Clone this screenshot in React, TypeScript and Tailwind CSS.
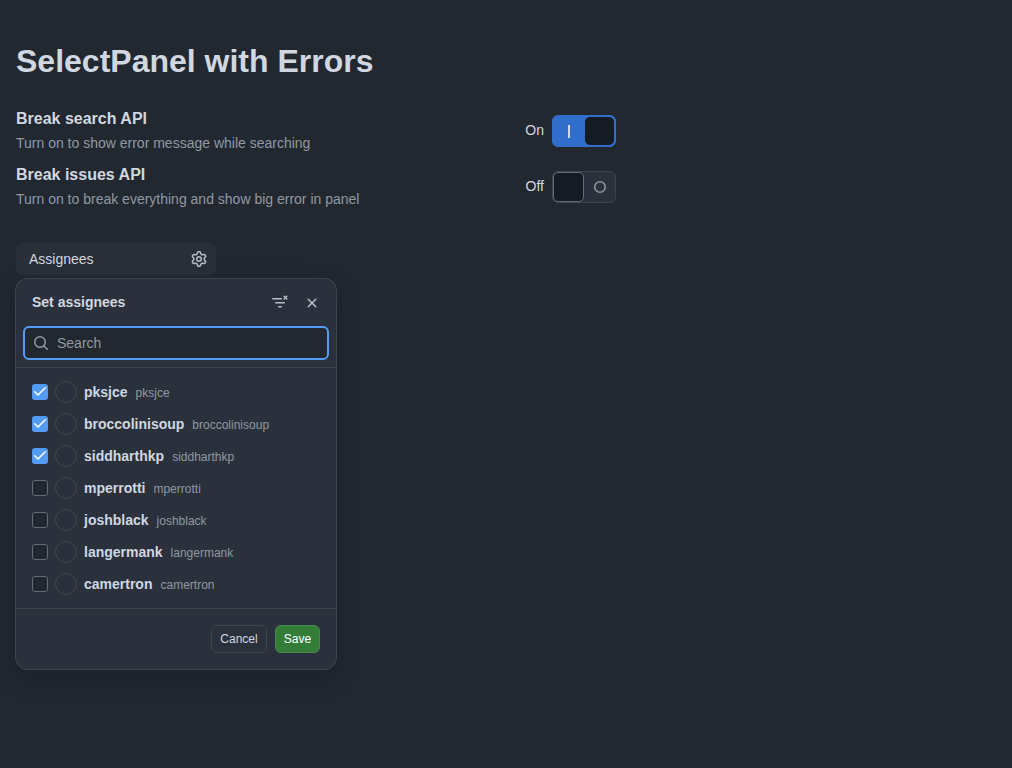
import React from "react";

const users = [
  { name: "pksjce", checked: true },
  { name: "broccolinisoup", checked: true },
  { name: "siddharthkp", checked: true },
  { name: "mperrotti", checked: false },
  { name: "joshblack", checked: false },
  { name: "langermank", checked: false },
  { name: "camertron", checked: false },
];

const GEAR =
  "M8 0a8.2 8.2 0 0 1 .701.031C9.444.095 9.99.645 10.16 1.29l.288 1.107c.018.066.079.158.212.224.231.114.454.243.668.386.123.082.233.09.299.071l1.103-.303c.644-.176 1.392.021 1.82.63.27.385.506.792.704 1.218.315.675.111 1.422-.364 1.891l-.814.806c-.049.048-.098.147-.088.294.016.257.016.515 0 .772-.01.147.038.246.088.294l.814.806c.475.469.679 1.216.364 1.891a7.977 7.977 0 0 1-.704 1.217c-.428.61-1.176.807-1.82.63l-1.102-.302c-.067-.019-.177-.011-.3.071a5.909 5.909 0 0 1-.668.386c-.133.066-.194.158-.211.224l-.29 1.106c-.168.646-.715 1.196-1.458 1.26a8.006 8.006 0 0 1-1.402 0c-.743-.064-1.289-.614-1.458-1.26l-.289-1.106c-.018-.066-.079-.158-.212-.224a5.738 5.738 0 0 1-.668-.386c-.123-.082-.233-.09-.299-.071l-1.103.303c-.644.176-1.392-.021-1.82-.63a8.12 8.12 0 0 1-.704-1.218c-.315-.675-.111-1.422.363-1.891l.815-.806c.05-.048.098-.147.088-.294a6.214 6.214 0 0 1 0-.772c.01-.147-.038-.246-.088-.294l-.815-.806C.635 6.045.431 5.298.746 4.623a7.92 7.92 0 0 1 .704-1.217c.428-.61 1.176-.807 1.82-.63l1.102.302c.067.019.177.011.3-.071.214-.143.437-.272.668-.386.133-.066.194-.158.211-.224l.29-1.106C6.009.645 6.556.095 7.299.03 7.53.01 7.764 0 8 0Zm-.571 1.525c-.036.003-.108.036-.137.146l-.289 1.105c-.147.561-.549.967-.998 1.189-.173.086-.34.183-.5.29-.417.278-.97.423-1.529.27l-1.103-.303c-.109-.03-.175.016-.195.045-.22.312-.412.644-.573.99-.014.031-.021.11.059.19l.815.806c.411.406.562.957.53 1.456a4.709 4.709 0 0 0 0 .582c.032.499-.119 1.05-.53 1.456l-.815.806c-.081.08-.073.159-.059.19.162.346.353.677.573.989.02.03.085.076.195.046l1.102-.303c.56-.153 1.113-.008 1.53.27.161.107.328.204.501.29.447.222.85.629.997 1.189l.289 1.105c.029.109.101.143.137.146a6.6 6.6 0 0 0 1.142 0c.036-.003.108-.036.137-.146l.289-1.105c.147-.561.549-.967.998-1.189.173-.086.34-.183.5-.29.417-.278.97-.423 1.529-.27l1.103.303c.109.029.175-.016.195-.045.22-.313.411-.644.573-.99.014-.031.021-.11-.059-.19l-.815-.806c-.411-.406-.562-.957-.53-1.456a4.709 4.709 0 0 0 0-.582c-.032-.499.119-1.05.53-1.456l.815-.806c.081-.08.073-.159.059-.19a6.464 6.464 0 0 0-.573-.989c-.02-.03-.085-.076-.195-.046l-1.102.303c-.56.153-1.113.008-1.53-.27a4.44 4.44 0 0 0-.501-.29c-.447-.222-.85-.629-.997-1.189l-.289-1.105c-.029-.11-.101-.143-.137-.146a6.6 6.6 0 0 0-1.142 0ZM11 8a3 3 0 1 1-6 0 3 3 0 0 1 6 0ZM9.5 8a1.5 1.5 0 1 0-3.001.001A1.5 1.5 0 0 0 9.5 8Z";
const SEARCH =
  "M10.68 11.74a6 6 0 0 1-7.922-8.982 6 6 0 0 1 8.982 7.922l3.04 3.04a.749.749 0 0 1-.326 1.275.749.749 0 0 1-.734-.215ZM11.5 7a4.499 4.499 0 1 0-8.997 0A4.499 4.499 0 0 0 11.5 7Z";
const CLOSE =
  "M3.72 3.72a.75.75 0 0 1 1.06 0L8 6.94l3.22-3.22a.749.749 0 0 1 1.275.326.749.749 0 0 1-.215.734L9.06 8l3.22 3.22a.749.749 0 0 1-.326 1.275.749.749 0 0 1-.734-.215L8 9.06l-3.22 3.22a.751.751 0 0 1-1.042-.018.751.751 0 0 1-.018-1.042L6.94 8 3.72 4.78a.75.75 0 0 1 0-1.06Z";

function Icon({ d, className = "" }: { d: string; className?: string }) {
  return (
    <svg viewBox="0 0 16 16" width="16" height="16" fill="currentColor" className={className}>
      <path fillRule="evenodd" d={d} />
    </svg>
  );
}

function FilterRemoveIcon() {
  return (
    <svg viewBox="0 0 16 16" width="16" height="16" fill="none" stroke="currentColor" strokeWidth="1.5" strokeLinecap="round">
      <path d="M.75 4.75h8.5M3.75 8.75h8.5M6.75 12.75h2.5" />
      <path d="M12.1 2.3l2.7 2.7M14.8 2.3l-2.7 2.7" strokeWidth="1.5" />
    </svg>
  );
}

function Toggle({ on }: { on: boolean }) {
  return on ? (
    <div className="flex h-8 w-16 items-center rounded-md border border-[#316dca] bg-[#316dca]">
      <div className="flex flex-1 items-center justify-center">
        <div className="h-[13px] w-0.5 bg-[#d1d7e0]" />
      </div>
      <div className="mr-px h-7 w-[29px] rounded-[5px] bg-[#151b23]" />
    </div>
  ) : (
    <div className="flex h-8 w-16 items-center rounded-md border border-[#3d444d] bg-[#2a313c]">
      <div className="h-[30px] w-[31px] rounded-[5px] border border-[#656c76] bg-[#151b23]" />
      <div className="flex flex-1 items-center justify-center">
        <svg viewBox="0 0 16 16" width="16" height="16" fill="none" stroke="#9198a1" strokeWidth="1.5">
          <circle cx="8" cy="8" r="5.25" />
        </svg>
      </div>
    </div>
  );
}

function Setting({ title, caption, on }: { title: string; caption: string; on: boolean }) {
  return (
    <div className="flex h-14 w-[600px] items-start justify-between">
      <div>
        <div className="text-base leading-6 font-bold">{title}</div>
        <div className="mt-0.5 text-sm leading-[21px] text-[#9198a1]">{caption}</div>
      </div>
      <div className="mt-2 flex items-center gap-2">
        <span className="pb-0.5 text-sm leading-[21px]">{on ? "On" : "Off"}</span>
        <Toggle on={on} />
      </div>
    </div>
  );
}

function Checkbox({ checked }: { checked: boolean }) {
  return checked ? (
    <div className="flex size-4 justify-center rounded-[3px] bg-[#539bf5] pt-[3px]">
      <svg viewBox="0 0 12 9" width="12" height="9" fill="white">
        <path
          fillRule="evenodd"
          clipRule="evenodd"
          d="M11.7803 0.219625C11.921 0.360427 12 0.551305 12 0.750313C12 0.949321 11.921 1.1402 11.7803 1.281L4.52864 8.5327C4.38784 8.67341 4.19696 8.75244 3.99795 8.75244C3.79894 8.75244 3.60807 8.67341 3.46727 8.5327L0.219625 5.28505C0.0870461 5.14277 0.0148699 4.95459 0.0183006 4.76014C0.0217313 4.5657 0.100503 4.38018 0.238018 4.24266C0.375533 4.10515 0.561056 4.02638 0.755499 4.02295C0.949943 4.01952 1.13812 4.09169 1.2804 4.22427L3.99795 6.94182L10.7189 0.219625C10.8598 0.0790133 11.0506 0 11.2496 0C11.4487 0 11.6395 0.0790133 11.7803 0.219625Z"
        />
      </svg>
    </div>
  ) : (
    <div className="size-4 rounded-[3px] border border-[#656c76] bg-[#212830]" />
  );
}

export default function App() {
  return (
    <div className="min-h-screen bg-[#212830] px-4 pt-[37px] font-['Liberation_Sans',Arial,sans-serif] text-sm text-[#d1d7e0]">
      <h1 className="mb-[22px] text-[32px] leading-[48px] font-bold">SelectPanel with Errors</h1>

      <Setting title="Break search API" caption="Turn on to show error message while searching" on />
      <Setting title="Break issues API" caption="Turn on to break everything and show big error in panel" on={false} />

      <button className="mt-6 flex h-8 w-[200px] items-center justify-between rounded-md bg-[#282f37] pr-[9px] pl-[13px]">
        <span>Assignees</span>
        <Icon d={GEAR} className="text-[#b7bdc8]" />
      </button>

      <div className="mt-1 h-[390px] w-80 rounded-xl bg-[#2a313c] shadow-[0_0_0_1px_#3d444d,0_8px_24px_0_#01040933]">
        <div className="flex h-12 items-center pr-4 pl-4">
          <h2 className="flex-1 pb-0.5 text-sm font-bold">Set assignees</h2>
          <div className="flex items-center gap-4 pb-0.5 text-[#b7bdc8]">
            <FilterRemoveIcon />
            <Icon d={CLOSE} className="mt-0.5" />
          </div>
        </div>
        <div className="mx-2 flex h-8 items-center gap-2 rounded-[5px] bg-[#212830] px-[9px] text-[#9198a1] outline-2 -outline-offset-1 outline-[#539bf5]">
          <Icon d={SEARCH} />
          <span>Search</span>
        </div>
        <ul className="mt-2 border-y border-[#3d444d] py-2">
          {users.map((u) => (
            <li key={u.name} className="flex h-8 items-center px-4">
              <Checkbox checked={u.checked} />
              <div className="ml-[7px] size-[22px] rounded-full border border-[#3f464f]" />
              <span className="ml-[7px] font-bold">{u.name}</span>
              <span className="ml-2 pt-0.5 text-xs text-[#9198a1]">{u.name}</span>
            </li>
          ))}
        </ul>
        <div className="flex justify-end gap-2 p-4 text-xs">
          <button className="h-7 w-14 rounded-md border border-[#3d444d]">Cancel</button>
          <button className="h-7 w-[45px] rounded-md border border-[#48894c] bg-[#347d39] text-white">Save</button>
        </div>
      </div>
    </div>
  );
}
